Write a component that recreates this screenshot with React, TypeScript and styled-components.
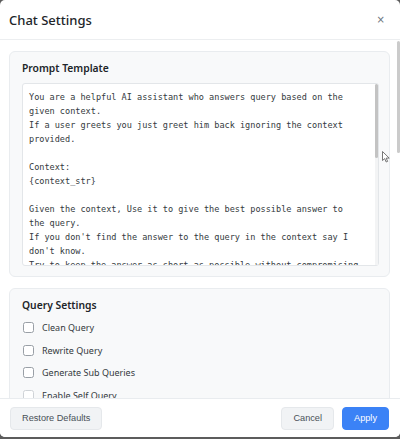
import React from "react";
import styled, { createGlobalStyle } from "styled-components";

const GlobalStyle = createGlobalStyle`
  html, body {
    margin: 0;
    padding: 0;
    width: 400px;
    height: 439px;
    overflow: hidden;
    background: #5c5c5c;
  }
  * { box-sizing: border-box; }
`;

const Dialog = styled.div`
  position: relative;
  width: 400px;
  height: 437px;
  background: #ffffff;
  border-radius: 5px;
  display: flex;
  flex-direction: column;
  overflow: hidden;
  font-family: "Noto Sans", "Open Sans", sans-serif;
  color: #212529;
`;

const Header = styled.header`
  height: 40px;
  flex: none;
  display: flex;
  align-items: center;
  justify-content: space-between;
  padding: 0 15px 0 9px;
  border-bottom: 1px solid #eceef0;
`;

const Title = styled.h2`
  margin: 0;
  font-size: 13px;
  font-weight: 500;
  line-height: 18px;
  color: #212529;
`;

const CloseButton = styled.button`
  border: none;
  background: transparent;
  padding: 0;
  font-family: "DejaVu Sans", sans-serif;
  font-size: 10px;
  line-height: 12px;
  color: #6c757d;
  cursor: pointer;
`;

const ScrollRegion = styled.div`
  position: relative;
  flex: 1;
  min-height: 0;
  overflow: hidden;
  padding: 11px 10px 0 9px;
  display: flex;
  flex-direction: column;
  gap: 11px;
`;

const ScrollThumb = styled.div`
  position: absolute;
  right: 0;
  top: 1px;
  width: 3.5px;
  height: 112px;
  border-radius: 2px;
  background: #cbcbcb;
`;

const Card = styled.section`
  flex: none;
  background: #f8f9fa;
  border: 1px solid #e9ecef;
  border-radius: 6px;
  padding: 9px 10px 10px 12px;
`;

const CardTitle = styled.h3`
  margin: 0 0 8px;
  font-size: 10.3px;
  font-weight: 600;
  line-height: 14px;
  color: #212529;
`;

const FieldWrap = styled.div`
  position: relative;
  height: 183px;
`;

const TemplateArea = styled.textarea`
  display: block;
  width: 100%;
  height: 100%;
  margin: 0;
  padding: 6px;
  border: 1px solid #e3e6e9;
  border-radius: 3px;
  background: #ffffff;
  color: #343a40;
  font-family: "DejaVu Sans Mono", "Liberation Mono", monospace;
  font-size: 8.55px;
  line-height: 14px;
  white-space: pre;
  overflow: hidden;
  resize: none;
  outline: none;
`;

const AreaTrack = styled.div`
  position: absolute;
  right: 1px;
  top: 1px;
  bottom: 1px;
  width: 3px;
  background: #f3f4f5;
`;

const AreaThumb = styled.div`
  width: 100%;
  height: 74px;
  border-radius: 1.5px;
  background: #c3c3c3;
`;

const OptionList = styled.div`
  display: flex;
  flex-direction: column;
  gap: 7.7px;
`;

const OptionRow = styled.label`
  display: flex;
  align-items: center;
  gap: 8px;
  height: 15px;
  padding-left: 1px;
`;

const Box = styled.input<{ $faded?: boolean }>`
  appearance: none;
  -webkit-appearance: none;
  margin: 0;
  width: 11px;
  height: 11px;
  flex: none;
  border: 1px solid ${(p) => (p.$faded ? "#cfd3d7" : "#999fa6")};
  border-radius: 2.5px;
  background: #ffffff;
`;

const OptionText = styled.span`
  font-size: 9px;
  line-height: 15px;
  color: #343a40;
`;

const Footer = styled.footer`
  flex: none;
  display: flex;
  justify-content: space-between;
  align-items: center;
  padding: 8px 11px 7px 10px;
  border-top: 1px solid #e9ecef;
  background: #ffffff;
`;

const ButtonGroup = styled.div`
  display: flex;
  gap: 8px;
`;

const Button = styled.button<{ $primary?: boolean }>`
  height: 23px;
  padding: 0 11px;
  border-radius: 4px;
  font-family: "Liberation Sans", Arial, sans-serif;
  font-size: 9.2px;
  line-height: 21px;
  cursor: pointer;
  border: 1px solid ${(p) => (p.$primary ? "#3b82f6" : "#e5e8eb")};
  background: ${(p) => (p.$primary ? "#3b82f6" : "#f1f3f5")};
  color: ${(p) => (p.$primary ? "#ffffff" : "#495057")};
`;

const Pointer = styled.svg`
  position: fixed;
  left: 382px;
  top: 151px;
  width: 8px;
  height: 12px;
`;

const template = `You are a helpful AI assistant who answers query based on the
given context.
If a user greets you just greet him back ignoring the context
provided.

Context:
{context_str}

Given the context, Use it to give the best possible answer to
the query.
If you don't find the answer to the query in the context say I
don't know.
Try to keep the answer as short as possible without compromising
on the quality of the answer.`;

const options = [
  { label: "Clean Query" },
  { label: "Rewrite Query" },
  { label: "Generate Sub Queries" },
  { label: "Enable Self Query", faded: true },
];

export default function App() {
  return (
    <>
      <GlobalStyle />
      <Dialog>
        <Header>
          <Title>Chat Settings</Title>
          <CloseButton aria-label="Close">×</CloseButton>
        </Header>
        <ScrollRegion>
          <Card>
            <CardTitle>Prompt Template</CardTitle>
            <FieldWrap>
              <TemplateArea readOnly wrap="off" value={template} />
              <AreaTrack>
                <AreaThumb />
              </AreaTrack>
            </FieldWrap>
          </Card>
          <Card>
            <CardTitle>Query Settings</CardTitle>
            <OptionList>
              {options.map((o) => (
                <OptionRow key={o.label}>
                  <Box type="checkbox" $faded={o.faded} />
                  <OptionText>{o.label}</OptionText>
                </OptionRow>
              ))}
            </OptionList>
          </Card>
          <ScrollThumb />
        </ScrollRegion>
        <Footer>
          <Button>Restore Defaults</Button>
          <ButtonGroup>
            <Button>Cancel</Button>
            <Button $primary>Apply</Button>
          </ButtonGroup>
        </Footer>
      </Dialog>
      <Pointer viewBox="0 0 8 12">
        <path
          d="M0.5 0.5 L0.5 9.5 L2.7 7.6 L4.2 11 L5.6 10.4 L4.2 7.1 L7.2 7.1 Z"
          fill="#ffffff"
          stroke="#555"
          strokeWidth="0.8"
          strokeLinejoin="round"
        />
      </Pointer>
    </>
  );
}
